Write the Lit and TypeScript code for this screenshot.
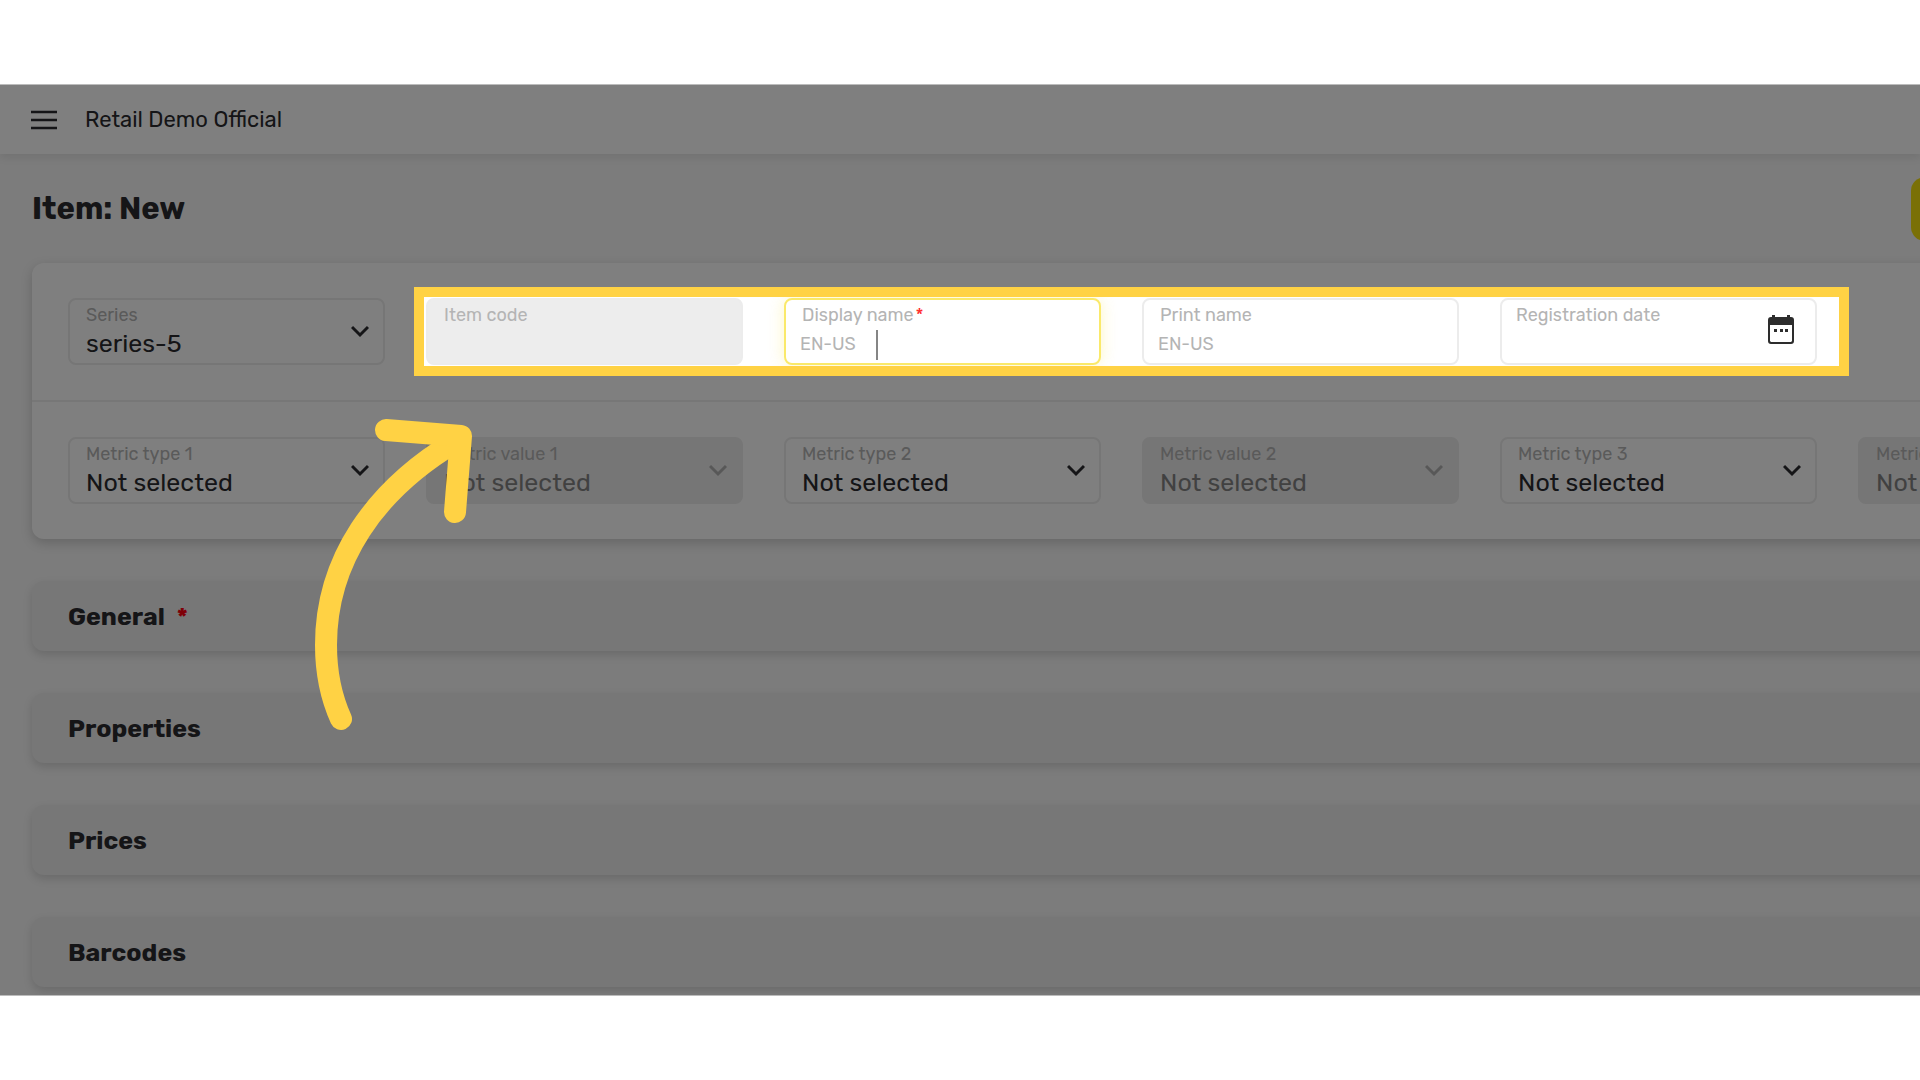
import { LitElement, html, css, svg, nothing } from "lit";
import { customElement, property } from "lit/decorators.js";

type Kind = "select" | "text" | "locale" | "date";

interface Field {
  id: string;
  label: string;
  kind: Kind;
  value?: string;
  disabled?: boolean;
  required?: boolean;
  active?: boolean;
}

const mainFields: Field[] = [
  { id: "series", label: "Series", kind: "select", value: "series-5" },
  { id: "item-code", label: "Item code", kind: "text", disabled: true },
  { id: "display-name", label: "Display name", kind: "locale", required: true, active: true },
  { id: "print-name", label: "Print name", kind: "locale" },
  { id: "registration-date", label: "Registration date", kind: "date" },
];

const metricFields: Field[] = [1, 2, 3].flatMap((n): Field[] => [
  { id: `metric-type-${n}`, label: `Metric type ${n}`, kind: "select", value: "Not selected" },
  { id: `metric-value-${n}`, label: `Metric value ${n}`, kind: "select", value: "Not selected", disabled: true },
]);

const sections = [
  { title: "General", required: true },
  { title: "Properties", required: false },
  { title: "Prices", required: false },
  { title: "Barcodes", required: false },
];

const chevron = svg`<path d="M1 2 L9 10 L17 2" fill="none" stroke="currentColor" stroke-width="3" />`;

@customElement("form-field")
class FormField extends LitElement {
  @property({ attribute: false }) field!: Field;

  static styles = css`
    :host {
      display: block;
      min-width: 0;
      contain: inline-size;
      isolation: isolate;
    }
    .box {
      box-sizing: border-box;
      display: grid;
      grid-template-columns: minmax(0, 1fr) auto;
      grid-template-rows: 28px 1fr;
      height: 67px;
      border: 2px solid #ececec;
      border-radius: 8px;
      background: #fff;
      color: #2a2a2e;
    }
    .box.disabled {
      background: #ededed;
      color: #838383;
    }
    .box.active {
      border-color: #fae96a;
      box-shadow: 0 0 16px rgba(250, 225, 60, 0.3);
    }
    .label {
      grid-column: 1;
      grid-row: 1;
      padding-left: 16px;
      color: #b4b4b4;
      font-size: 18px;
      line-height: 30px;
      white-space: nowrap;
      z-index: 1;
      pointer-events: none;
    }
    .date .label {
      padding-left: 14px;
    }
    .mark {
      margin-left: 2px;
      color: #ff2c2c;
    }
    select,
    input {
      box-sizing: border-box;
      width: 100%;
      min-width: 0;
      margin: 0;
      border: 0;
      outline: 0;
      background: transparent;
      color: inherit;
      font: inherit;
      font-size: 25px;
      opacity: 1;
    }
    select {
      appearance: none;
      grid-column: 1 / 3;
      grid-row: 1 / 3;
      height: 100%;
      padding: 25px 44px 0 16px;
      line-height: 32px;
    }
    .plain {
      grid-column: 1;
      grid-row: 2;
      padding: 0 16px;
    }
    .locale-row {
      grid-column: 1 / 3;
      grid-row: 2;
      display: flex;
      align-items: center;
      padding: 0 14px 2px;
    }
    .locale {
      flex: none;
      color: #b4b4b4;
      font-size: 18px;
      line-height: 32px;
      padding-bottom: 2px;
    }
    .caret {
      flex: none;
      width: 2px;
      height: 30px;
      margin-left: 20px;
      background: #858585;
    }
    .chevron {
      grid-column: 2;
      grid-row: 1 / 3;
      align-self: center;
      margin-right: 14px;
      z-index: 1;
      pointer-events: none;
    }
    .disabled .chevron {
      color: #b0b0b0;
    }
    .picker {
      grid-column: 2;
      grid-row: 1 / 3;
      align-self: center;
      display: flex;
      margin: 0 21px 4px 0;
      padding: 0;
      border: 0;
      background: none;
      color: #2d2d2d;
    }
  `;

  private control() {
    const f = this.field;
    switch (f.kind) {
      case "select":
        return html`<select id=${f.id} ?disabled=${f.disabled}>
            <option>${f.value}</option>
          </select>
          <svg class="chevron" width="18" height="13" viewBox="0 0 18 13" aria-hidden="true">${chevron}</svg>`;
      case "locale":
        return html`<div class="locale-row">
          <span class="locale">EN-US</span>
          ${f.active ? html`<span class="caret"></span>` : nothing}
          <input id=${f.id} type="text" />
        </div>`;
      case "date":
        return html`<input class="plain" id=${f.id} type="text" />
          <button class="picker" type="button" aria-label="Choose date">
            <svg width="26" height="29" viewBox="0 0 26 29" aria-hidden="true">
              <path d="M4 0h3v2h12V0h3v2h1a3 3 0 0 1 3 3v21a3 3 0 0 1-3 3H3a3 3 0 0 1-3-3V5a3 3 0 0 1 3-3h1zM2 10v16l1 1h20l1-1V10z" fill="currentColor" fill-rule="evenodd" />
              <path d="M6 14h3v3H6zM12 14h3v3h-3zM17 14h3v3h-3z" fill="currentColor" />
            </svg>
          </button>`;
      default:
        return html`<input class="plain" id=${f.id} type="text" ?disabled=${f.disabled} />`;
    }
  }

  render() {
    const f = this.field;
    const state = `${f.kind} ${f.disabled ? "disabled" : ""} ${f.active ? "active" : ""}`;
    return html`<div class="box ${state}">
      <label class="label" for=${f.id}>${f.label}${f.required ? html`<span class="mark">*</span>` : nothing}</label>
      ${this.control()}
    </div>`;
  }
}

@customElement("app-root")
class AppRoot extends LitElement {
  static styles = css`
    :host {
      display: block;
      font-family: Rubik, Roboto, "Liberation Sans", sans-serif;
      color: #2a2a2e;
    }
    .stage {
      box-sizing: border-box;
      display: flex;
      flex-direction: column;
      height: 100vh;
      padding: 84px 0;
      background: #fff;
    }
    .frame {
      position: relative;
      flex: 1;
      min-height: 0;
      overflow: hidden;
      border: solid #bcbcbc;
      border-width: 1px 0;
      background: #f8f8f8;
    }
    .topbar {
      position: relative;
      display: flex;
      align-items: center;
      gap: 28px;
      height: 69px;
      padding: 0 31px;
      background: #fff;
      box-shadow: 0 4px 8px rgba(0, 0, 0, 0.08);
    }
    .menu {
      display: flex;
      padding: 0;
      border: 0;
      background: none;
      color: #2a2a2e;
    }
    .company {
      font-size: 22px;
      line-height: 28px;
    }
    .content {
      display: flex;
      flex-direction: column;
      gap: 42px;
      width: max-content;
      min-width: 100%;
      box-sizing: border-box;
      padding: 23px 32px 42px;
    }
    .heading {
      display: flex;
      align-items: center;
      justify-content: space-between;
      margin-bottom: -20px;
    }
    h1 {
      margin: 0;
      font-size: 31px;
      font-weight: 700;
      line-height: 40px;
    }
    .save {
      width: 300px;
      height: 64px;
      border: 0;
      border-radius: 14px;
      background: #f5e00c;
    }
    .card {
      border-radius: 12px;
      background: #fff;
      box-shadow: 0 4px 12px rgba(0, 0, 0, 0.18);
    }
    .row {
      display: grid;
      grid-template-columns: repeat(6, minmax(317px, 1fr));
      gap: 41px;
      padding: 35px 36px;
    }
    .row + .row {
      border-top: 2px solid #efefef;
    }
    .section {
      display: flex;
      align-items: center;
      gap: 12px;
      height: 70px;
      padding: 0 36px;
      border: 0;
      border-radius: 12px;
      background: #eee;
      box-shadow: 0 4px 10px rgba(0, 0, 0, 0.14);
      color: inherit;
      font: inherit;
      font-size: 25px;
      font-weight: 700;
      text-align: left;
    }
    .mark {
      color: #ff0010;
    }
    .spotlight {
      position: absolute;
      left: 414px;
      top: 202px;
      box-sizing: border-box;
      width: 1435px;
      height: 89px;
      border: 10px solid #ffd244;
      box-shadow: 0 0 0 9999px rgba(0, 0, 0, 0.5);
      pointer-events: none;
    }
    .arrow {
      position: absolute;
      left: 310px;
      top: 330px;
      pointer-events: none;
    }
  `;

  private row(fields: Field[]) {
    return html`<div class="row">${fields.map((f) => html`<form-field .field=${f}></form-field>`)}</div>`;
  }

  render() {
    return html`<div class="stage">
      <div class="frame">
        <header class="topbar">
          <button class="menu" type="button" aria-label="Menu">
            <svg width="26" height="20" viewBox="0 0 26 20" aria-hidden="true">
              <path d="M0 2h26M0 10h26M0 18h26" stroke="currentColor" stroke-width="2.6" />
            </svg>
          </button>
          <span class="company">Retail Demo Official</span>
        </header>
        <main class="content">
          <div class="heading">
            <h1>Item: New</h1>
            <button class="save" type="button" aria-label="Save"></button>
          </div>
          <div class="card">${this.row(mainFields)}${this.row(metricFields)}</div>
          ${sections.map(
            (s) => html`<button class="section" type="button" aria-expanded="false">
              <span>${s.title}</span>${s.required ? html`<span class="mark">*</span>` : nothing}
            </button>`,
          )}
        </main>
        <div class="spotlight"></div>
        <svg class="arrow" width="170" height="320" viewBox="310 415 170 320" aria-hidden="true">
          <g fill="none" stroke="#ffd244" stroke-width="22" stroke-linecap="round" stroke-linejoin="round">
            <path d="M341 719 C331 697 326 671 326 645 C326 560 375 490 455 442" />
            <path d="M386 430 L461 436 L455 512" />
          </g>
        </svg>
      </div>
    </div>`;
  }
}
